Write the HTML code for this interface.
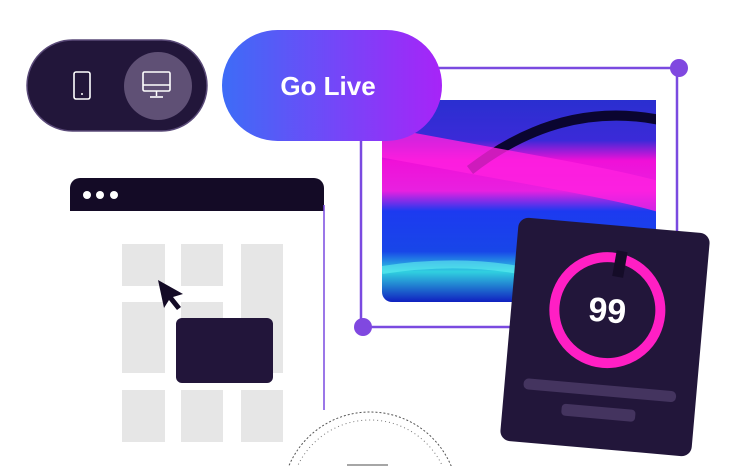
<!DOCTYPE html>
<html><head><style>
html,body{margin:0;width:740px;height:466px;overflow:hidden;background:#fff}
svg{display:block}
</style></head><body>
<svg width="740" height="466" style="position:absolute;left:0;top:0">
<defs>
<linearGradient id="g" x1="0" x2="1"><stop offset="0" stop-color="#3d6cf7"/><stop offset="1" stop-color="#a724f8"/></linearGradient>
<linearGradient id="ph" x1="0" y1="0" x2="0" y2="1">
<stop offset="0" stop-color="#2a2fd0"/><stop offset="0.2" stop-color="#3b2ad8"/><stop offset="0.3" stop-color="#f010d8"/><stop offset="0.45" stop-color="#e820e0"/><stop offset="0.55" stop-color="#1c3af0"/><stop offset="0.75" stop-color="#1846e8"/><stop offset="0.85" stop-color="#30d0e0"/><stop offset="1" stop-color="#1020c0"/></linearGradient>
<clipPath id="pc"><path d="M382 100H656V302H392a10 10 0 0 1-10-10Z"/></clipPath>
</defs>
<line x1="420" y1="68" x2="679" y2="68" stroke="#7a4ae0" stroke-width="2.5"/>
<line x1="677" y1="68" x2="677" y2="240" stroke="#7a4ae0" stroke-width="2.5"/>
<line x1="361" y1="130" x2="361" y2="327" stroke="#7a4ae0" stroke-width="2.5"/>
<line x1="361" y1="327" x2="520" y2="327" stroke="#7a4ae0" stroke-width="2.5"/>
<circle cx="679" cy="68" r="9" fill="#8048e0"/>
<circle cx="363" cy="327" r="9" fill="#8048e0"/>
<g clip-path="url(#pc)">
<rect x="382" y="100" width="274" height="202" fill="url(#ph)"/>
<path d="M470 170 Q560 100 660 120" stroke="#0a0530" stroke-width="10" fill="none"/>
<path d="M370 140 Q480 160 560 175 T670 200" stroke="#ff20e0" stroke-width="30" fill="none" opacity=".8"/>
<path d="M382 270 Q480 255 560 280" stroke="#60f0f0" stroke-width="8" fill="none" opacity=".6"/>
</g>
<rect x="27" y="40" width="180" height="91" rx="45.5" fill="#22163a" stroke="#5a4a78" stroke-width="1.5"/>
<circle cx="158" cy="86" r="34" fill="#5f5075"/>
<rect x="74" y="72" width="16" height="27" rx="2" fill="none" stroke="#fff" stroke-width="1.6"/>
<circle cx="82" cy="94" r="1" fill="#fff"/>
<rect x="143" y="72" width="27" height="19" rx="1.5" fill="none" stroke="#fff" stroke-width="1.6"/>
<line x1="143" y1="85" x2="170" y2="85" stroke="#fff" stroke-width="1.5"/>
<line x1="156.5" y1="91" x2="156.5" y2="96" stroke="#fff" stroke-width="1.5"/>
<line x1="150" y1="97" x2="163" y2="97" stroke="#fff" stroke-width="1.6"/>
<rect x="222" y="30" width="220" height="111" rx="55.5" fill="url(#g)"/>
<text x="328" y="95" text-anchor="middle" font-size="26" font-weight="bold" fill="#fff" font-family="Liberation Sans,sans-serif">Go Live</text>
<path d="M70 211V188a10 10 0 0 1 10-10H314a10 10 0 0 1 10 10V211Z" fill="#140b26"/>
<line x1="324" y1="205" x2="324" y2="410" stroke="#7a4ae0" stroke-width="1.5"/>
<circle cx="87" cy="195" r="4" fill="#fff"/><circle cx="100" cy="195" r="4" fill="#fff"/><circle cx="114" cy="195" r="4" fill="#fff"/>
<g fill="#e6e6e6">
<rect x="122" y="244" width="43" height="42"/><rect x="181" y="244" width="42" height="42"/><rect x="241" y="244" width="42" height="129"/>
<rect x="122" y="302" width="43" height="71"/><rect x="181" y="302" width="42" height="71"/>
<rect x="122" y="390" width="43" height="52"/><rect x="181" y="390" width="42" height="52"/><rect x="241" y="390" width="42" height="52"/>
</g>
<rect x="176" y="318" width="97" height="65" rx="6" fill="#22153a"/>
<path d="M158 280 L183 294 L173 297 L181 307 L177 310 L169 300 L164 308 Z" fill="#140b26"/>
<circle cx="370" cy="500" r="88" fill="none" stroke="#555" stroke-width="1" stroke-dasharray="2 2"/>
<circle cx="370" cy="500" r="80" fill="none" stroke="#777" stroke-width="1" stroke-dasharray="1 3"/>
<line x1="347" y1="465" x2="388" y2="465" stroke="#888" stroke-width="1.5"/>
<g transform="translate(605,337) rotate(5)">
<rect x="-96" y="-112" width="192" height="224" rx="10" fill="#22163a"/>
<circle cx="0" cy="-27" r="53" fill="none" stroke="#ff1fc4" stroke-width="10"/>
<rect x="3" y="-87" width="11" height="26" fill="#150c28" transform="rotate(5 8 -74)"/>
<text x="0" y="-15" text-anchor="middle" font-size="34" font-weight="bold" fill="#fff" font-family="Liberation Sans,sans-serif">99</text>
<rect x="-77" y="48" width="153" height="11" rx="5" fill="#44345f"/>
<rect x="-37" y="70" width="74" height="12" rx="4" fill="#44345f"/>
</g>
</svg>
</body></html>
